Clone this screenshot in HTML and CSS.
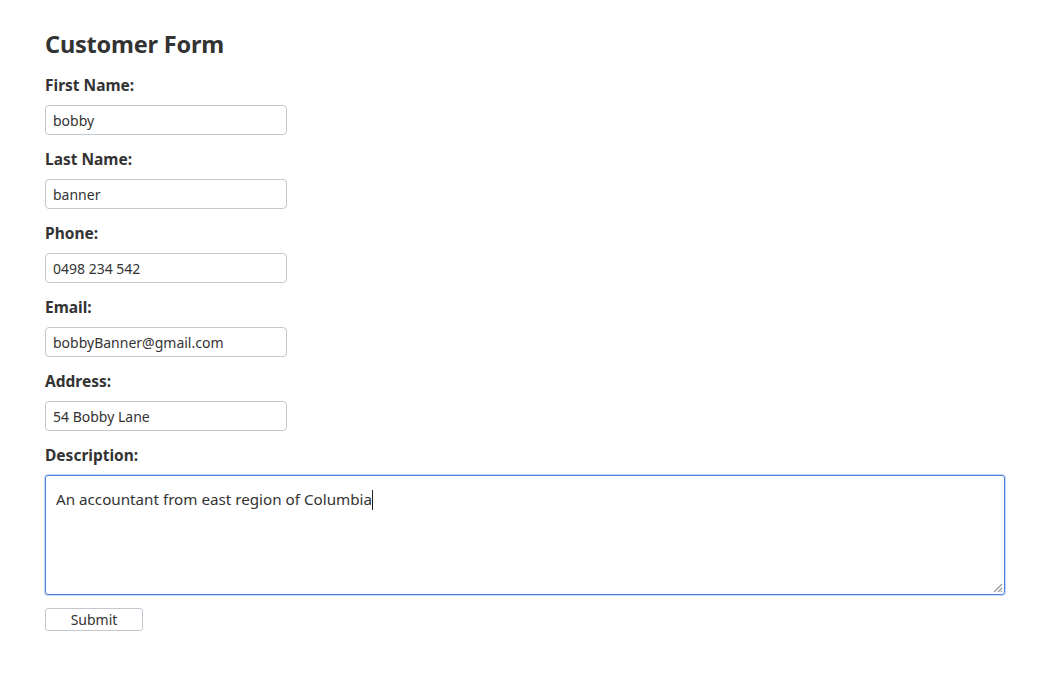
FILE: index.html
```html
<!DOCTYPE html>
<html>
<head>
<meta charset="utf-8">
<link rel="stylesheet" href="styles.css">
</head>
<body>
<form class="form">
  <h2 class="title">Customer Form</h2>
  <div class="field">
    <label class="label">First Name:</label>
    <input class="input" type="text" value="bobby">
  </div>
  <div class="field">
    <label class="label">Last Name:</label>
    <input class="input" type="text" value="banner">
  </div>
  <div class="field">
    <label class="label">Phone:</label>
    <input class="input" type="text" value="0498 234 542">
  </div>
  <div class="field">
    <label class="label">Email:</label>
    <input class="input" type="text" value="bobbyBanner@gmail.com">
  </div>
  <div class="field">
    <label class="label">Address:</label>
    <input class="input" type="text" value="54 Bobby Lane">
  </div>
  <div class="field">
    <label class="label">Description:</label>
    <div class="textarea"><span>An accountant from east region of Columbia</span><span class="caret"></span><svg class="grip" width="12" height="12" viewBox="0 0 12 12"><path d="M11 3 L3 11 M11 7 L7 11 M11 10 L10 11" stroke="#9a9a9a" stroke-width="1.2"/></svg></div>
  </div>
  <button class="submit" type="button">Submit</button>
</form>
</body>
</html>
```
FILE: styles.css
```css
html, body {
  margin: 0;
  padding: 0;
  background: #ffffff;
}
body {
  font-family: "Noto Sans", "Open Sans", sans-serif;
  color: #333333;
}
.form {
  display: flex;
  flex-direction: column;
  padding: 29px 45px 0 45px;
  width: 960px;
}
.title {
  margin: 0 0 14px 0;
  font-size: 23.5px;
  line-height: 30px;
  font-weight: bold;
  letter-spacing: -0.2px;
}
.field {
  display: flex;
  flex-direction: column;
  margin-bottom: 12px;
}
.label {
  font-size: 15.5px;
  font-weight: bold;
  line-height: 22px;
  padding-top: 1px;
  margin-bottom: 9px;
  letter-spacing: 0;
}
.input {
  box-sizing: border-box;
  width: 242px;
  height: 30px;
  border: 1px solid #c3c7cf;
  border-radius: 4px;
  padding: 0 7px;
  font-family: "Noto Sans", "Open Sans", sans-serif;
  font-size: 14px;
  color: #333333;
  letter-spacing: 0;
  outline: none;
}
.textarea {
  position: relative;
  box-sizing: border-box;
  width: 960px;
  height: 120px;
  border: 1px solid #4a7fdc;
  border-radius: 3px;
  box-shadow: 0 0 0 1px #c7d9f3;
  padding: 12px 10px;
  font-size: 15.2px;
  line-height: 22px;
  letter-spacing: 0;
  color: #333333;
  display: flex;
  align-items: flex-start;
}
.caret {
  display: inline-block;
  width: 1px;
  height: 20px;
  background: #222;
  margin-top: 2px;
}
.grip {
  position: absolute;
  right: 1px;
  bottom: 1px;
}
.submit {
  align-self: flex-start;
  margin-top: 1px;
  box-sizing: border-box;
  width: 98px;
  height: 23px;
  background: #ffffff;
  border: 1px solid #c3c7cf;
  border-radius: 3px;
  font-family: "Noto Sans", "Open Sans", sans-serif;
  font-size: 14px;
  color: #333333;
  padding: 0;
}
```
